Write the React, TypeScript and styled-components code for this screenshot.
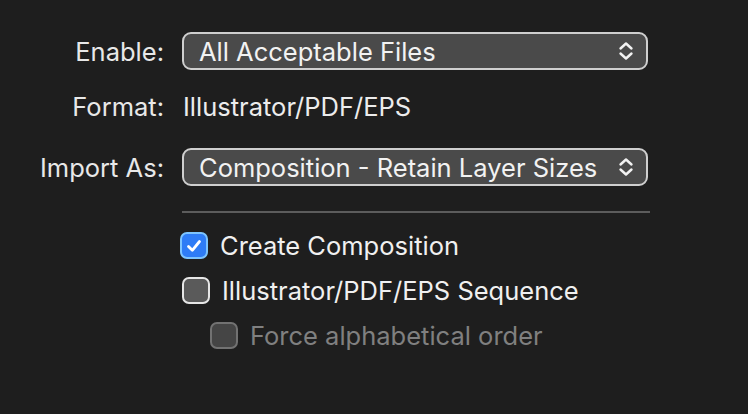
import styled, { createGlobalStyle } from 'styled-components';

const GlobalStyle = createGlobalStyle`
    html, body {
        margin: 0;
        padding: 0;
        background: #1e1e1e;
    }
    body {
        font-family: Inter, "Noto Sans", sans-serif;
        color: #e6e6e6;
        -webkit-font-smoothing: antialiased;
    }
`;

function Chevrons() {
    return (
        <svg width="16" height="20" viewBox="0 0 16 20" fill="none">
            <path d="M2.5 7.5 L8 2.5 L13.5 7.5" stroke="#f2f2f2" strokeWidth="2.4" strokeLinecap="round" strokeLinejoin="round" />
            <path d="M2.5 12.5 L8 17.5 L13.5 12.5" stroke="#f2f2f2" strokeWidth="2.4" strokeLinecap="round" strokeLinejoin="round" />
        </svg>
    );
}

function Check() {
    return (
        <svg width="20" height="20" viewBox="0 0 20 20" fill="none">
            <path d="M4.5 10.5 L8.3 14.3 L15.5 5.5" stroke="#fff" strokeWidth="2.8" strokeLinecap="round" strokeLinejoin="round" />
        </svg>
    );
}

function App() {
    return (
        <>
            <GlobalStyle />
            <Panel>
                <Form>
                    <Label>Enable:</Label>
                    <Popup>
                        <span>All Acceptable Files</span>
                        <Chevrons />
                    </Popup>
                    <Label $raised>Format:</Label>
                    <Value $raised>Illustrator/PDF/EPS</Value>
                    <Label>Import As:</Label>
                    <Popup>
                        <span>Composition - Retain Layer Sizes</span>
                        <Chevrons />
                    </Popup>
                </Form>
                <Options>
                    <Separator />
                    <CheckRow $shift={-2}>
                        <Box $checked>
                            <Check />
                        </Box>
                        <span>Create Composition</span>
                    </CheckRow>
                    <CheckRow>
                        <Box />
                        <span>Illustrator/PDF/EPS Sequence</span>
                    </CheckRow>
                    <CheckRow $shift={28} $disabled>
                        <Box $disabled />
                        <span>Force alphabetical order</span>
                    </CheckRow>
                </Options>
            </Panel>
        </>
    );
}

export default App;

const Panel = styled.main`
    width: 748px;
    height: 414px;
    box-sizing: border-box;
    padding-top: 32px;
`;

const Form = styled.div`
    display: grid;
    grid-template-columns: 164px 466px;
    column-gap: 18px;
    grid-template-rows: 38px 78px 38px;
    align-items: center;
`;

const Label = styled.div<{ $raised?: boolean }>`
    text-align: right;
    font-size: 25.5px;
    color: #e8e8e8;
    margin-bottom: ${(p) => (p.$raised ? '6px' : '0')};
`;

const Value = styled.div<{ $raised?: boolean }>`
    font-size: 25.5px;
    color: #ececec;
    padding-left: 1px;
    margin-bottom: ${(p) => (p.$raised ? '6px' : '0')};
`;

const Popup = styled.div`
    display: flex;
    align-items: center;
    justify-content: space-between;
    box-sizing: border-box;
    height: 38px;
    padding: 0 12px 0 15px;
    border: 2px solid #cfcfcf;
    border-radius: 9px;
    background: #4a4a4a;
    font-size: 25.5px;
    color: #f2f2f2;
`;

const Options = styled.div`
    margin-left: 182px;
    width: 468px;
    padding-top: 25px;
`;

const Separator = styled.div`
    height: 2px;
    background: #5c5c5c;
    margin-bottom: 10px;
`;

const CheckRow = styled.label<{ $shift?: number; $disabled?: boolean }>`
    display: flex;
    align-items: center;
    gap: 12px;
    height: 45px;
    margin-left: ${(p) => p.$shift ?? 0}px;
    font-size: 25.5px;
    color: ${(p) => (p.$disabled ? '#808080' : '#f0f0f0')};
`;

const Box = styled.div<{ $checked?: boolean; $disabled?: boolean }>`
    display: flex;
    align-items: center;
    justify-content: center;
    box-sizing: border-box;
    width: 28px;
    height: 27px;
    border-radius: 7px;
    border: 2px solid ${(p) => (p.$checked ? '#7cc4ff' : p.$disabled ? '#727272' : '#e6e6e6')};
    background: ${(p) => (p.$checked ? '#2e7cf6' : p.$disabled ? '#454545' : '#5a5a5a')};
`;
